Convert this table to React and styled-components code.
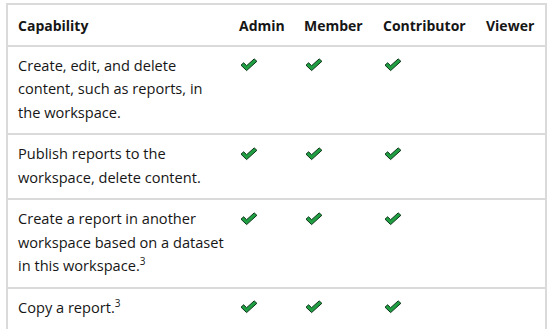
import React from "react";
import styled, { createGlobalStyle } from "styled-components";

const GlobalStyle = createGlobalStyle`
  body {
    margin: 0;
    background: #ffffff;
    font-family: "Open Sans", "Liberation Sans", sans-serif;
    color: #161616;
  }
`;

const Wrapper = styled.div`
  padding: 3px 4px 0 6px;
  height: 326px;
  overflow: hidden;
`;

const Table = styled.table`
  width: 539px;
  table-layout: fixed;
  border-collapse: collapse;
  border: 2px solid #dadada;
  font-size: 14.6px;
  line-height: 23.5px;
`;

const Th = styled.th`
  text-align: left;
  font-weight: 700;
  font-size: 14px;
  padding: 9px 4px 7px 10px;
  border-bottom: 2px solid #dadada;
  white-space: nowrap;
`;

const Td = styled.td`
  vertical-align: top;
  padding: ${(p) => (p.$clipped ? "1px" : "7px")} 4px 9px 10px;
  border-bottom: 2px solid #dadada;
`;

const Sup = styled.sup`
  font-size: 10px;
  line-height: 0;
  vertical-align: 6px;
`;

const CheckBox = styled.span`
  display: inline-flex;
  height: 23px;
  align-items: center;
  padding-left: 1px;
`;

function Check() {
  return (
    <CheckBox>
      <svg width="18" height="14" viewBox="0 0 18 14">
        <path
          d="M1 7.2 L3.6 4.8 L6.6 7.7 L14.2 0.9 L16.9 3.3 L6.6 12.6 Z"
          fill="#1f9e42"
          stroke="#0b3518"
          strokeWidth="1"
          strokeLinejoin="round"
        />
      </svg>
    </CheckBox>
  );
}

const rows = [
  { text: "Create, edit, and delete content, such as reports, in the workspace.", roles: [1, 1, 1, 0] },
  { text: "Publish reports to the workspace, delete content.", roles: [1, 1, 1, 0] },
  { text: "Create a report in another workspace based on a dataset in this workspace.", sup: "3", roles: [1, 1, 1, 0] },
  { text: "Copy a report.", sup: "3", roles: [1, 1, 1, 0] },
  { text: "Create metrics based on reports in the workspace.", roles: [1, 1, 0, 0], clipped: true },
];

export default function App() {
  return (
    <Wrapper>
      <GlobalStyle />
      <Table>
        <colgroup>
          <col style={{ width: 222 }} />
          <col style={{ width: 65 }} />
          <col style={{ width: 79 }} />
          <col style={{ width: 103 }} />
          <col style={{ width: 70 }} />
        </colgroup>
        <thead>
          <tr>
            <Th>Capability</Th>
            <Th>Admin</Th>
            <Th>Member</Th>
            <Th>Contributor</Th>
            <Th>Viewer</Th>
          </tr>
        </thead>
        <tbody>
          {rows.map((r, i) => (
            <tr key={i}>
              <Td $clipped={r.clipped}>
                {r.text}
                {r.sup && <Sup>{r.sup}</Sup>}
              </Td>
              {r.roles.map((on, j) => (
                <Td key={j} $clipped={r.clipped}>
                  {on ? <Check /> : null}
                </Td>
              ))}
            </tr>
          ))}
        </tbody>
      </Table>
    </Wrapper>
  );
}
